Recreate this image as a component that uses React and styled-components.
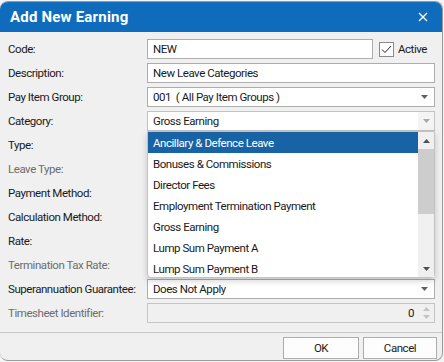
import React from "react";
import styled, { createGlobalStyle } from "styled-components";

const GlobalStyle = createGlobalStyle`
  html, body {
    margin: 0;
    padding: 0;
    background: #f4f4f4;
  }
  body {
    font-family: Roboto, "Liberation Sans", sans-serif;
    font-size: 11.5px;
    letter-spacing: -0.45px;
    color: #1a1a1a;
  }
`;

const categories = [
  "Ancillary & Defence Leave",
  "Bonuses & Commissions",
  "Director Fees",
  "Employment Termination Payment",
  "Gross Earning",
  "Lump Sum Payment A",
  "Lump Sum Payment B",
];

function Arrow({ up, color = "#606060" }) {
  return (
    <svg width="7" height="4" viewBox="0 0 7 4">
      <path d={up ? "M0 4 L3.5 0 L7 4 Z" : "M0 0 L7 0 L3.5 4 Z"} fill={color} />
    </svg>
  );
}

function App() {
  return (
    <>
      <GlobalStyle />
      <Dialog>
        <TitleBar>
          <Title>Add New Earning</Title>
          <Close>
            <svg width="10" height="10" viewBox="0 0 10 10">
              <path d="M1 1 L9 9 M9 1 L1 9" stroke="#fff" strokeWidth="1.4" />
            </svg>
          </Close>
        </TitleBar>

        <Form>
          <Label>Code:</Label>
          <Inline>
            <Input $width="226px">NEW</Input>
            <Check>
              <svg width="11" height="9" viewBox="0 0 11 9">
                <path d="M1 4.5 L4 7.5 L10 1" stroke="#222" strokeWidth="1" fill="none" />
              </svg>
            </Check>
            <span>Active</span>
          </Inline>

          <Label>Description:</Label>
          <Input>New Leave Categories</Input>

          <Label>Pay Item Group:</Label>
          <Select>
            <span>001&nbsp; ( All Pay Item Groups )</span>
            <Arrow />
          </Select>

          <Label>Category:</Label>
          <Anchor>
            <Select $open>
              <span>Gross Earning</span>
              <DropButton>
                <Arrow color="#a8a8a8" />
              </DropButton>
            </Select>
            <List>
              <Items>
                {categories.map((c, i) => (
                  <Item key={c} $selected={i === 0}>
                    {c}
                  </Item>
                ))}
              </Items>
              <Scrollbar>
                <ScrollArrow>
                  <Arrow up color="#505050" />
                </ScrollArrow>
                <Track>
                  <Thumb />
                </Track>
                <ScrollArrow>
                  <Arrow color="#505050" />
                </ScrollArrow>
              </Scrollbar>
            </List>
          </Anchor>

          <Label>Type:</Label>
          <Empty />
          <Label $disabled>Leave Type:</Label>
          <Empty />
          <Label>Payment Method:</Label>
          <Empty />
          <Label>Calculation Method:</Label>
          <Empty />
          <Label>Rate:</Label>
          <Empty />
          <Label $disabled>Termination Tax Rate:</Label>
          <Empty />

          <Label>Superannuation Guarantee:</Label>
          <Select>
            <span>Does Not Apply</span>
            <Arrow />
          </Select>

          <Label $disabled>Timesheet Identifier:</Label>
          <Spin>
            <span>0</span>
            <SpinArrows>
              <Arrow up color="#c4c4c4" />
              <Arrow color="#c4c4c4" />
            </SpinArrows>
          </Spin>
        </Form>

        <Footer>
          <Button $width="76px">OK</Button>
          <Button $width="74px">Cancel</Button>
        </Footer>
      </Dialog>
    </>
  );
}

const Dialog = styled.div`
  margin-top: 1px;
  width: 443px;
  height: 360px;
  box-sizing: border-box;
  background: #f0f0f0;
  border: 1px solid #9a9a9a;
  border-left: none;
  border-radius: 8px;
  overflow: hidden;
  display: flex;
  flex-direction: column;
`;

const TitleBar = styled.div`
  height: 30px;
  background: #0f6cbd;
  display: flex;
  align-items: center;
  justify-content: space-between;
  padding: 0 14px 0 10px;
  flex-shrink: 0;
`;

const Title = styled.div`
  color: #fff;
  font-weight: 700;
  font-size: 15px;
  letter-spacing: 0.2px;
`;

const Close = styled.div`
  display: flex;
  align-items: center;
`;

const Form = styled.div`
  display: grid;
  grid-template-columns: 139px 288px;
  grid-auto-rows: 20px;
  row-gap: 4px;
  padding: 7px 0 0 8px;
  align-items: center;
`;

const Label = styled.div`
  color: ${(p) => (p.$disabled ? "#6d6d6d" : "#1a1a1a")};
  white-space: nowrap;
`;

const Inline = styled.div`
  display: flex;
  align-items: center;
  height: 20px;
`;

const Field = styled.div`
  height: 20px;
  box-sizing: border-box;
  border: 1px solid #adadad;
  background: #fff;
  display: flex;
  align-items: center;
  padding: 0 5px;
  white-space: nowrap;
`;

const Input = styled(Field)`
  width: ${(p) => p.$width || "100%"};
`;

const Select = styled(Field)`
  justify-content: space-between;
  padding-right: ${(p) => (p.$open ? "0" : "6px")};
  border-color: ${(p) => (p.$open ? "#c3c3c3" : "#adadad")};
`;

const DropButton = styled.div`
  width: 16px;
  height: 100%;
  background: #f4f4f4;
  display: flex;
  align-items: center;
  justify-content: center;
`;

const Check = styled.div`
  width: 15px;
  height: 15px;
  box-sizing: border-box;
  border: 1px solid #8a8a8a;
  background: #fff;
  display: flex;
  align-items: center;
  justify-content: center;
  margin: 0 4px 0 6px;
`;

const Anchor = styled.div`
  position: relative;
  height: 20px;
  z-index: 2;
`;

const List = styled.div`
  position: absolute;
  top: 20px;
  left: 0;
  width: 288px;
  height: 147px;
  box-sizing: border-box;
  background: #fff;
  border: 1px solid #c2c2c2;
  border-radius: 0 0 4px 4px;
  box-shadow: 0 3px 6px rgba(0, 0, 0, 0.18);
  display: flex;
`;

const Items = styled.div`
  flex: 1;
`;

const Item = styled.div`
  height: 21px;
  display: flex;
  align-items: center;
  padding-left: 5px;
  background: ${(p) => (p.$selected ? "#1763a6" : "transparent")};
  color: ${(p) => (p.$selected ? "#fff" : "#1a1a1a")};
  white-space: nowrap;
`;

const Scrollbar = styled.div`
  width: 16px;
  background: #f0f0f0;
  display: flex;
  flex-direction: column;
`;

const ScrollArrow = styled.div`
  height: 17px;
  display: flex;
  align-items: center;
  justify-content: center;
`;

const Track = styled.div`
  flex: 1;
`;

const Thumb = styled.div`
  height: 65px;
  background: #cdcdcd;
`;

const Empty = styled.div``;

const Spin = styled(Field)`
  background: #f0f0f0;
  border-color: #c5c5c5;
  justify-content: flex-end;
  padding-right: 4px;
  gap: 9px;
`;

const SpinArrows = styled.div`
  display: flex;
  flex-direction: column;
  gap: 4px;
`;

const Footer = styled.div`
  margin-top: 9px;
  border-top: 1px solid #c8c8c8;
  display: flex;
  justify-content: flex-end;
  gap: 4px;
  padding: 4px 5px 0 0;
`;

const Button = styled.div`
  width: ${(p) => p.$width};
  height: 22px;
  box-sizing: border-box;
  border: 1px solid #adadad;
  background: #fdfdfd;
  display: flex;
  align-items: center;
  justify-content: center;
`;

export default App;
